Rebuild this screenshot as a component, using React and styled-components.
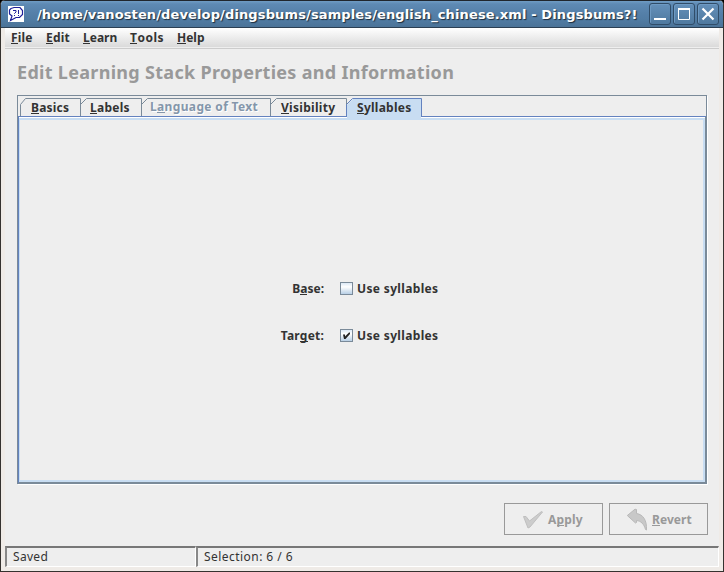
import React from "react";
import styled, { createGlobalStyle } from "styled-components";

const Global = createGlobalStyle`
  * { box-sizing: border-box; }
  body { margin: 0; background: #000; overflow: hidden; }
`;

const Window = styled.div`
  width: 724px;
  height: 572px;
  display: flex;
  flex-direction: column;
  background: #efebe7;
  border: solid #35322f;
  border-width: 0 1px 1px;
  border-radius: 5px 5px 0 0;
  overflow: hidden;
  font: bold 12px/16px "Noto Sans", "Open Sans", sans-serif;
  color: #333;
  white-space: nowrap;
`;

const TitleBar = styled.header`
  height: 28px;
  flex: none;
  display: flex;
  align-items: center;
  padding: 1px 4px 0 7px;
  background: linear-gradient(#6f9cc4 0, #5e8ab4 3px, #5580a9 12px, #517ca4 18px, #4b7398 26px);
  border-top: 1px solid #20262d;
  border-bottom: 1px solid #2b3f53;
`;

const AppIcon = styled.svg`
  width: 16px;
  height: 16px;
  margin-top: -1px;
  background: #fff;
`;

const Title = styled.h1`
  flex: 1;
  margin: 0 0 0 13px;
  font: bold 13px/20px "DejaVu Sans", sans-serif;
  letter-spacing: ${(p) => p.$spacing}px;
  color: #fff;
  text-shadow: 1px 1px 1px #1d2c3b;
`;

const Controls = styled.div`
  display: flex;
  gap: 2px;
  margin-top: -1px;
`;

const Control = styled.button`
  width: 22px;
  height: 22px;
  padding: 0;
  border: 1px solid #304d69;
  border-radius: 3px;
  background: linear-gradient(#6490ba, #4f799f);
  box-shadow: inset 1px 1px #6e9ac3;
  svg { display: block; width: 20px; height: 20px; }
`;

const Client = styled.main`
  flex: 1;
  min-height: 0;
  margin: 0 4px 4px;
  background: #eee;
  display: flex;
  flex-direction: column;
`;

const MenuBar = styled.nav`
  height: 21px;
  flex: none;
  display: flex;
  padding: 2px 0 0 6px;
  background: linear-gradient(#fff, #dadada 19px, #eee 19px);
  border-bottom: 1px solid #ccc;
`;

const MenuItem = styled.span`
  width: ${(p) => p.$width}px;
  letter-spacing: ${(p) => p.$spacing}px;
`;

const Mnemonic = styled.span`
  display: inline-block;
  height: 14px;
  line-height: 16px;
  border-bottom: 1px solid currentColor;
  vertical-align: top;
`;

const Heading = styled.h2`
  margin: 11px 0 0 12px;
  height: 35px;
  font: bold 18px/24px "Noto Sans", "Open Sans", sans-serif;
  letter-spacing: ${(p) => p.$spacing}px;
  color: #999;
`;

const TabPane = styled.section`
  width: 690px;
  height: 389px;
  margin: 0 0 0 12px;
  flex: none;
  border: solid #7a8a99;
  border-width: 1px 1px 0 1px;
  box-shadow: 1px 1px #fff;
  display: flex;
  flex-direction: column;
`;

const TabRow = styled.div`
  height: 21px;
  padding: 2px 0 0 2px;
  display: flex;
  flex: none;
  border-bottom: 1px solid #6382bf;
`;

const TabItem = styled.div`
  position: relative;
  width: ${(p) => p.$width}px;
  height: ${(p) => (p.$active ? 21 : 18)}px;
  z-index: ${(p) => (p.$active ? 1 : 0)};
  padding: ${(p) => (p.$disabled ? 1 : 2)}px 0 0 ${(p) => p.$pad}px;
  letter-spacing: ${(p) => p.$spacing}px;
  color: ${(p) => (p.$disabled ? "#8496aa" : "#333")};
  text-shadow: ${(p) => (p.$disabled ? "1px 1px #fff" : "none")};
`;

const TabShape = styled.svg`
  position: absolute;
  inset: 0;
  width: 100%;
  height: 100%;
  z-index: -1;
  overflow: visible;
`;

const TabBody = styled.div`
  flex: 1;
  border: solid;
  border-width: 0 1px 2px 1px;
  border-color: #7a8a99 #7a8a99 #7a8a99 #6382bf;
  box-shadow: inset 0 1px #fff, inset 0 3px #c8ddf2, inset -2px -2px #c8ddf2, inset 1px 0 #c8ddf2;
  padding: 163px 0 0 0;
`;

const OptionRow = styled.div`
  display: flex;
  align-items: center;
  height: 16px;
  margin-bottom: 31px;
`;

const OptionLabel = styled.span`
  width: 305px;
  padding-top: 2px;
  text-align: right;
  letter-spacing: ${(p) => p.$spacing}px;
`;

const CheckOption = styled.label`
  display: flex;
  align-items: center;
  gap: 4px;
  margin-left: 16px;
  letter-spacing: 0.35px;
`;

const OptionText = styled.span`
  padding-top: 2px;
`;

const CheckBox = styled.span`
  width: 13px;
  height: 13px;
  border: 1px solid #7a8a99;
  background: linear-gradient(#dce9f6, #fff 35%, #b8cfe5);
  svg { display: block; width: 11px; height: 11px; }
`;

const Actions = styled.div`
  display: flex;
  gap: 6px;
  margin: 19px 0 0 499px;
`;

const Action = styled.button`
  width: 99px;
  height: 32px;
  display: flex;
  align-items: center;
  padding: 0 0 0 ${(p) => p.$pad}px;
  gap: ${(p) => p.$gap}px;
  border: 1px solid #999;
  border-radius: 0;
  background: #eee;
  font: inherit;
  letter-spacing: ${(p) => p.$spacing}px;
  color: #999;
`;

const ActionText = styled.span`
  padding-top: 2px;
`;

const ActionIcon = styled.svg`
  width: 22px;
  height: 24px;
  flex: none;
`;

const StatusBar = styled.footer`
  display: flex;
  margin-top: auto;
  height: 21px;
  font-weight: normal;
`;

const StatusCell = styled.div`
  flex: ${(p) => (p.$width ? `0 0 ${p.$width}px` : 1)};
  padding: 1px 0 0 6px;
  border: solid;
  border-width: 2px 1px 1px 2px;
  border-color: #777 #fff #fff #888;
  letter-spacing: ${(p) => p.$spacing}px;
`;

function Keyed({ text, at = 0 }) {
  return (
    <>
      {text.slice(0, at)}
      <Mnemonic>{text[at]}</Mnemonic>
      {text.slice(at + 1)}
    </>
  );
}

const menus = [
  { text: "File", width: 35, spacing: 0.2 },
  { text: "Edit", width: 37, spacing: 0.2 },
  { text: "Learn", width: 47, spacing: 0 },
  { text: "Tools", width: 47, spacing: 0.5 },
  { text: "Help", width: 40, spacing: 0 },
];

const tabs = [
  { text: "Basics", width: 61, pad: 11, spacing: 0.2, first: true },
  { text: "Labels", width: 61, pad: 9, spacing: 0.25 },
  { text: "Language of Text", at: 1, width: 129, pad: 8, spacing: 0.35 },
  { text: "Visibility", width: 76, pad: 10, spacing: 0.3 },
  { text: "Syllables", width: 75, pad: 10, spacing: 0.25, active: true },
].map((t) => ({ ...t, disabled: t.text === "Language of Text" }));

function Tab({ tab }) {
  const w = tab.width;
  const h = tab.active ? 21 : 18;
  const start = tab.first ? "M.5 18V6.5" : tab.active ? "M-.5 18V6.5" : "M-.5 6.500";
  return (
    <TabItem $width={w} $pad={tab.pad} $spacing={tab.spacing} $active={tab.active} $disabled={tab.disabled}>
      <TabShape viewBox={`0 0 ${w} ${h}`}>
        {tab.active && <path d={`M0 ${h}V7L6 1H${w - 1}V${h}Z`} fill="#c8ddf2" />}
        <path
          d={`${start}L5.500 .5H${w - 0.5}V18`}
          fill="none"
          stroke={tab.active ? "#6382bf" : "#7a8a99"}
        />
      </TabShape>
      <Keyed text={tab.text} at={tab.at} />
    </TabItem>
  );
}

export default function App() {
  return (
    <>
      <Global />
      <Window>
        <TitleBar>
          <AppIcon viewBox="0 0 16 16" fill="none" stroke="#20209a">
            <path d="M3 2.5 6 1.5h6l2.500 3v4l-3 3H8L2.5 14.5 4 10 1.5 8V4Z" strokeWidth="1.200" />
            <path d="M5 4.500h3V6L6.500 7.500V8M6.500 9v1M10.500 4v4M10.500 9v1" />
          </AppIcon>
          <Title $spacing={0.125}>/home/vanosten/develop/dingsbums/samples/english_chinese.xml - Dingsbums?!</Title>
          <Controls>
            <Control aria-label="Minimize"><svg viewBox="0 0 20 20"><path d="M4 15h12" stroke="#fff" strokeWidth="2" /></svg></Control>
            <Control aria-label="Maximize"><svg viewBox="0 0 20 20"><path d="M4.5 5h11v10.500h-11Z" fill="none" stroke="#fff" /><path d="M4 5h12" stroke="#fff" strokeWidth="2" /></svg></Control>
            <Control aria-label="Close"><svg viewBox="0 0 20 20"><path d="m4.500 4.500 11 11m0-11-11 11" stroke="#fff" strokeWidth="2.200" /></svg></Control>
          </Controls>
        </TitleBar>
        <Client>
          <MenuBar>
            {menus.map((m) => (
              <MenuItem key={m.text} $width={m.width} $spacing={m.spacing}><Keyed text={m.text} /></MenuItem>
            ))}
          </MenuBar>
          <Heading $spacing={0.3}>Edit Learning Stack Properties and Information</Heading>
          <TabPane>
            <TabRow>{tabs.map((t) => <Tab key={t.text} tab={t} />)}</TabRow>
            <TabBody>
              <OptionRow>
                <OptionLabel $spacing={0}><Keyed text="Base:" at={1} /></OptionLabel>
                <CheckOption><CheckBox /><OptionText>Use syllables</OptionText></CheckOption>
              </OptionRow>
              <OptionRow>
                <OptionLabel $spacing={0.2}><Keyed text="Target:" at={3} /></OptionLabel>
                <CheckOption>
                  <CheckBox>
                    <svg viewBox="0 0 11 11"><path d="M2 4.500h2v2L8 2.500h1V4L4.500 9H3Z" fill="#222" /></svg>
                  </CheckBox>
                  <OptionText>Use syllables</OptionText>
                </CheckOption>
              </OptionRow>
            </TabBody>
          </TabPane>
          <Actions>
            <Action disabled $pad={17} $gap={4} $spacing={0.2}>
              <ActionIcon viewBox="0 0 22 24"><path d="M1.500 9.500 4 9.500 7.500 14 19.500 4.500 20.500 5 8 20 6 21Z" fill="#ccc" stroke="#bfbfbf" strokeLinejoin="round" /></ActionIcon>
              <ActionText><Keyed text="Apply" at={1} /></ActionText>
            </Action>
            <Action disabled $pad={16} $gap={4} $spacing={0.05}>
              <ActionIcon viewBox="0 0 22 24"><path d="M1.300 8.500 9 2.200 10.500 2.500V6.500C17 7.500 21 13 20.500 23L19.500 22.500C18 17 15 14 10.500 13.500V15.500L9.500 16Z" fill="#c8c8c8" stroke="#b9b9b9" strokeLinejoin="round" /></ActionIcon>
              <ActionText><Keyed text="Revert" /></ActionText>
            </Action>
          </Actions>
          <StatusBar>
            <StatusCell $width={191} $spacing={0.3}>Saved</StatusCell>
            <StatusCell $spacing={0.45}>Selection: 6 / 6</StatusCell>
          </StatusBar>
        </Client>
      </Window>
    </>
  );
}
